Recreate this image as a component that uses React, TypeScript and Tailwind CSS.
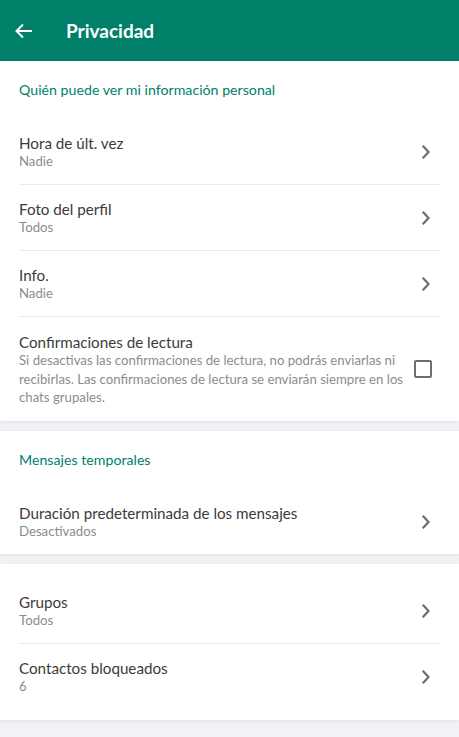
import React from "react";

const Chevron = () => (
  <svg width="10" height="14" viewBox="0 0 10 14" className="shrink-0">
    <path d="M2.5 1.5 L7.5 7 L2.5 12.5" fill="none" stroke="#6b6f72" strokeWidth="2.2" strokeLinecap="square" />
  </svg>
);

const Row = ({ title, sub, divider = true }: { title: string; sub: string; divider?: boolean }) => (
  <div className="h-[66px] mx-[19px] flex items-center justify-between border-b border-[#e9ebec]" style={divider ? {} : { borderBottom: "none", height: 65 }}>
    <div className="flex flex-col">
      <span className="text-[15.2px] leading-[18px] text-[#3b3b3b]">{title}</span>
      <span className="text-[13.2px] leading-[18px] text-[#8a8d8f]">{sub}</span>
    </div>
    <div className="pr-[9px]">
      <Chevron />
    </div>
  </div>
);

export default function App() {
  return (
    <div className="w-[459px] h-[737px] bg-[#f0f2f5] overflow-hidden" style={{ fontFamily: 'Lato, "Open Sans", sans-serif' }}>
      <header className="h-[61px] bg-[#008069] flex items-center">
        <svg width="18" height="16" viewBox="0 0 18 16" className="ml-[15px]">
          <path d="M17 8 H2 M8 1.5 L1.5 8 L8 14.5" fill="none" stroke="white" strokeWidth="2" />
        </svg>
        <h1 className="ml-[33px] mt-[2px] text-white text-[19px] font-bold">Privacidad</h1>
      </header>

      <section className="bg-white shadow-[0_1px_3px_rgba(11,20,26,0.08)]">
        <div className="h-[58px] flex items-center px-[19px] text-[14.2px] text-[#00806a]">Quién puede ver mi información personal</div>
        <Row title="Hora de últ. vez" sub="Nadie" />
        <Row title="Foto del perfil" sub="Todos" />
        <Row title="Info." sub="Nadie" />
        <div className="h-[104px] mx-[19px] flex items-center justify-between">
          <div className="flex flex-col max-w-[392px] pt-[2px]">
            <span className="text-[15.2px] leading-[18px] text-[#3b3b3b]">Confirmaciones de lectura</span>
            <span className="text-[13.2px] leading-[18.5px] text-[#8a8d8f]">
              Si desactivas las confirmaciones de lectura, no podrás enviarlas ni recibirlas. Las confirmaciones de lectura se enviarán siempre en los chats grupales.
            </span>
          </div>
          <div className="w-[18px] h-[18px] border-2 border-[#6b6f72] rounded-[2px] mr-[8px] shrink-0" />
        </div>
      </section>

      <section className="mt-[10px] bg-white shadow-[0_1px_3px_rgba(11,20,26,0.08)]">
        <div className="h-[58px] flex items-center px-[19px] text-[14.2px] text-[#00806a]">Mensajes temporales</div>
        <Row title="Duración predeterminada de los mensajes" sub="Desactivados" divider={false} />
      </section>

      <section className="mt-[10px] bg-white pt-[14px] pb-[11px] shadow-[0_1px_3px_rgba(11,20,26,0.08)]">
        <Row title="Grupos" sub="Todos" />
        <Row title="Contactos bloqueados" sub="6" divider={false} />
      </section>
    </div>
  );
}
